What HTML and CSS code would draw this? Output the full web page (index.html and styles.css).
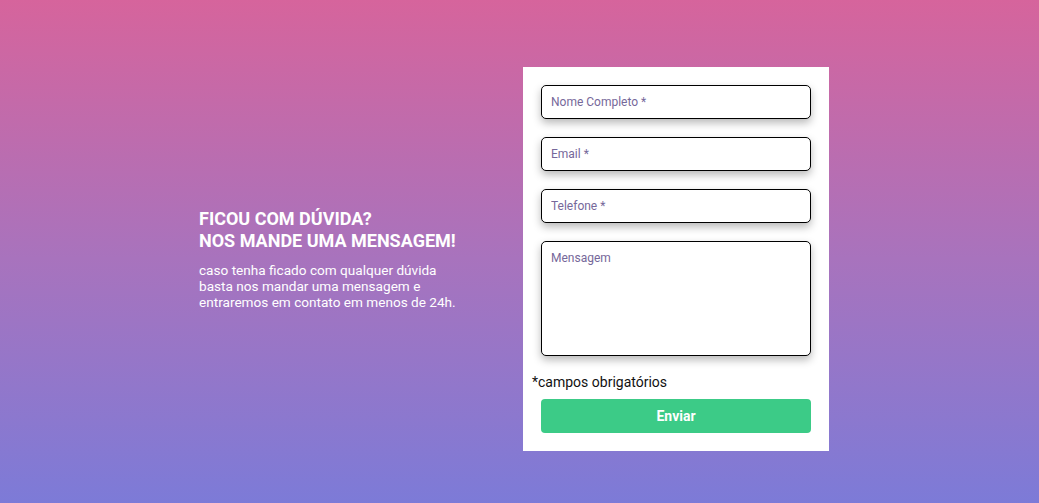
FILE: index.html
```html
<!DOCTYPE html>
<html lang="pt-BR">
<head>
<meta charset="utf-8">
<title>Contato</title>
<link rel="stylesheet" href="styles.css">
</head>
<body>
<main class="contact">
  <section class="intro">
    <h1 class="intro-title">FICOU COM DÚVIDA?<br>NOS MANDE UMA MENSAGEM!</h1>
    <p class="intro-text">caso tenha ficado com qualquer dúvida basta nos mandar uma mensagem e entraremos em contato em menos de 24h.</p>
  </section>
  <form class="card">
    <input class="field" type="text" placeholder="Nome Completo *">
    <input class="field" type="email" placeholder="Email *">
    <input class="field" type="tel" placeholder="Telefone *">
    <textarea class="field field-area" placeholder="Mensagem"></textarea>
    <p class="note">*campos obrigatórios</p>
    <button class="submit" type="button">Enviar</button>
  </form>
</main>
</body>
</html>
```

FILE: styles.css
```css
html {
  min-height: 100%;
  background: linear-gradient(180deg, #d6649c 0%, #a873bd 50%, #7a7bd9 100%);
}
body {
  margin: 8px;
  font-family: Roboto, "Liberation Sans", sans-serif;
}
.contact {
  min-height: calc(100vh - 2px);
  display: flex;
  align-items: center;
  justify-content: center;
  gap: 64px;
  padding-right: 11px;
  box-sizing: border-box;
}
.intro {
  width: 260px;
  color: #fff;
}
.intro-title {
  margin: 0 0 10px;
  font-size: 18px;
  line-height: 22px;
  font-weight: 700;
}
.intro-text {
  margin: 0;
  font-size: 13.6px;
  line-height: 16px;
}
.card {
  width: 306px;
  box-sizing: border-box;
  background: #fff;
  padding: 18px 18px;
  display: flex;
  flex-direction: column;
}
.field {
  display: block;
  width: 270px;
  height: 34px;
  box-sizing: border-box;
  border: 1px solid #000;
  border-radius: 5px;
  padding: 0 9px;
  margin: 0 0 18px;
  font-family: Roboto, "Liberation Sans", sans-serif;
  font-size: 12px;
  box-shadow: 0 4px 8px rgba(0, 0, 0, 0.28);
  background: #fff;
  outline: none;
}
.field::placeholder {
  color: #76689a;
}
.field-area {
  height: 115px;
  padding: 9px 9px;
  resize: none;
  margin-bottom: 0;
}
.note {
  margin: 18px 0 0 -9px;
  font-size: 14px;
  line-height: 16px;
  color: #111;
}
.submit {
  margin-top: 9px;
  width: 270px;
  height: 34px;
  border: 0;
  border-radius: 4px;
  background: #3ccb87;
  color: #fff;
  font-family: Roboto, "Liberation Sans", sans-serif;
  font-size: 14px;
  font-weight: 700;
}
```
